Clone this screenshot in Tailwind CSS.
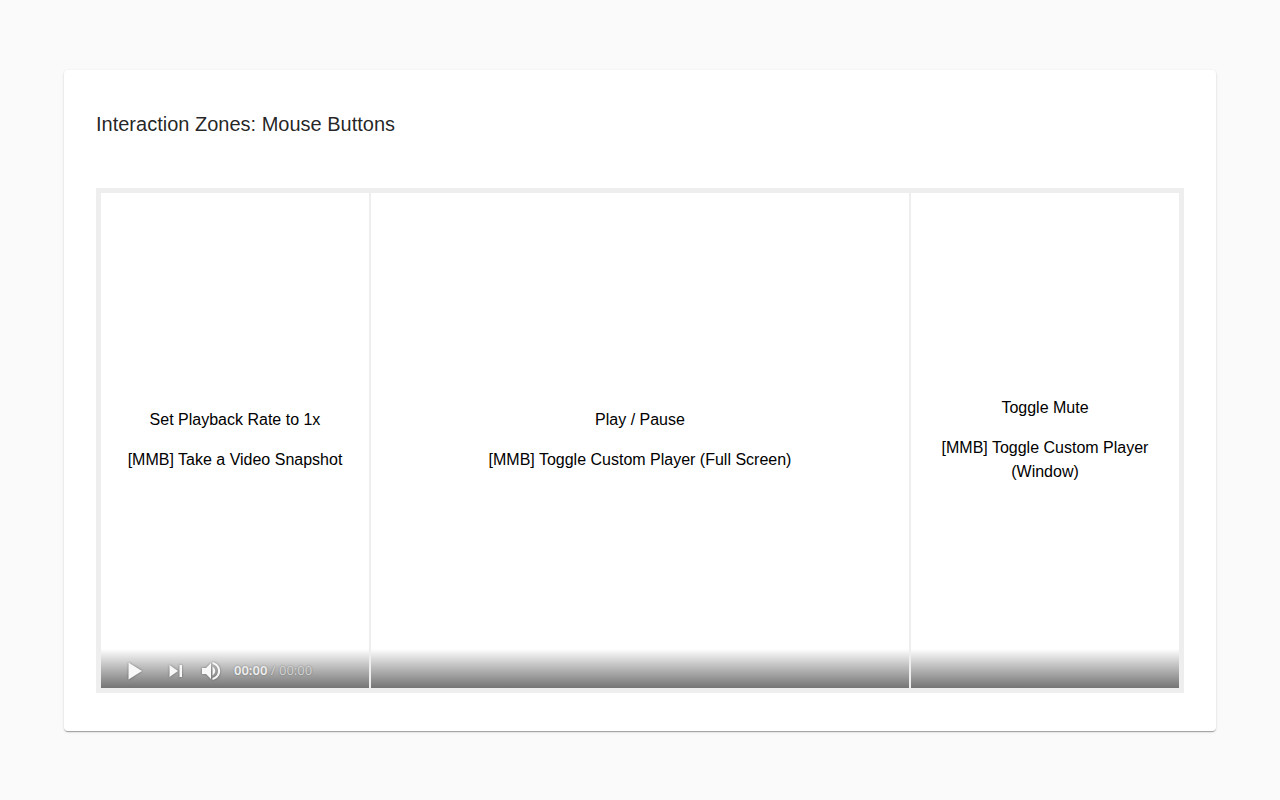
<!DOCTYPE html>
<html lang="en">
<head>
  <meta charset="UTF-8">
  <meta name="viewport" content="width=device-width, initial-scale=1.0">
  <title>Interaction Zones: Mouse Buttons</title>
  <script src="https://cdn.jsdelivr.net/npm/@tailwindcss/browser@4"></script>
</head>
<body class="bg-[#fafafa] text-black font-['Liberation_Sans',Arial,sans-serif]">
  <main class="min-h-screen flex flex-col px-16 pt-[70px] pb-[69px]">
    <!-- Card -->
    <section class="flex-1 flex flex-col bg-white rounded px-8 pt-[38px] pb-[38px] shadow-[0_2px_1px_-1px_rgba(0,0,0,0.2),0_1px_1px_0_rgba(0,0,0,0.14),0_1px_3px_0_rgba(0,0,0,0.12)]">
      <h1 class="text-xl leading-8 text-black/87 mb-12">Interaction Zones: Mouse Buttons</h1>

      <!-- Player zones -->
      <div class="flex-1 grid grid-cols-4 gap-0.5 bg-[#eee] border-5 border-[#eee]">
        <div class="relative bg-white flex flex-col items-center justify-center gap-4 px-4 pt-4 pb-[18px] text-center">
          <p>Set Playback Rate to 1x</p>
          <p>[MMB] Take a Video Snapshot</p>

          <!-- Player controls -->
          <div class="absolute inset-x-0 bottom-0 h-[39px] pt-1 pl-[22px] flex items-center bg-linear-to-b from-white to-[#757575] text-[#f8f8f8]">
            <button type="button" aria-label="Play" class="w-6 mr-[18px] drop-shadow-[0_0_1px_rgba(0,0,0,0.4)]">
              <svg class="size-6" viewBox="0 0 24 24" fill="currentColor"><path d="M5.5 3.5v17L19 12z"/></svg>
            </button>
            <button type="button" aria-label="Next" class="w-5 mr-3.5 drop-shadow-[0_0_1px_rgba(0,0,0,0.4)]">
              <svg class="size-5" viewBox="0 0 20 20" fill="currentColor"><path d="M4.500 4v12l8.500-6zM14.500 4H17v12h-2.500z"/></svg>
            </button>
            <button type="button" aria-label="Mute" class="w-6 mr-[11px] drop-shadow-[0_0_1px_rgba(0,0,0,0.4)]">
              <svg class="size-6" viewBox="0 0 24 24" fill="currentColor"><path d="M3 9v6h4l5 5V4L7 9H3zm10.5-1.200v8.400c1.700-.8 2.800-2.400 2.800-4.200s-1.100-3.400-2.800-4.200zM13.500 3v2.100c3.200.8 5.500 3.600 5.500 6.900s-2.300 6.100-5.500 6.900V21c4.400-.9 7.700-4.600 7.700-9S17.900 3.900 13.500 3z"/></svg>
            </button>
            <span class="pb-px font-['Noto_Sans',sans-serif] text-[13px] leading-5 text-[#d2d2d2] text-shadow-[0_0_2px_rgba(0,0,0,0.35)]"><span class="font-semibold text-[#eee]">00:00</span> / 00:00</span>
          </div>
        </div>

        <div class="relative col-span-2 bg-white flex flex-col items-center justify-center gap-4 px-4 pt-4 pb-[18px] text-center">
          <p>Play / Pause</p>
          <p>[MMB] Toggle Custom Player (Full Screen)</p>
          <div class="absolute inset-x-0 bottom-0 h-[39px] bg-linear-to-b from-white to-[#757575]"></div>
        </div>

        <div class="relative bg-white flex flex-col items-center justify-center gap-4 px-4 pt-4 pb-[18px] text-center">
          <p>Toggle Mute</p>
          <p>[MMB] Toggle Custom Player (Window)</p>
          <div class="absolute inset-x-0 bottom-0 h-[39px] bg-linear-to-b from-white to-[#757575]"></div>
        </div>
      </div>
    </section>
  </main>
</body>
</html>
